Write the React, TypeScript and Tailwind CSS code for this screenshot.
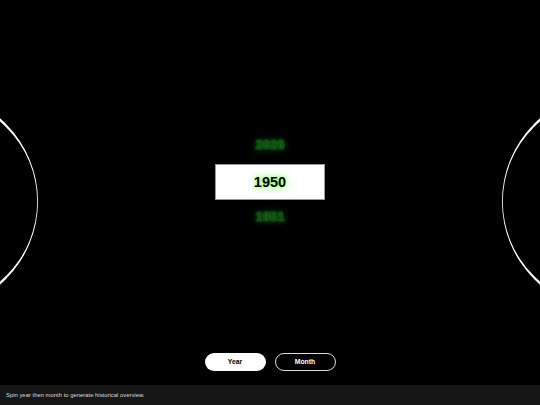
import React from "react";

function Crescent({ cx, dir }: { cx: number; dir: 1 | -1 }) {
  const cy = 201.5;
  const ro = 110;
  const ri = 104.4;
  const cxi = cx + dir * 4.8;
  const d =
    `M ${cx - ro} ${cy} a ${ro} ${ro} 0 1 0 ${2 * ro} 0 a ${ro} ${ro} 0 1 0 ${-2 * ro} 0 Z ` +
    `M ${cxi - ri} ${cy} a ${ri} ${ri} 0 1 0 ${2 * ri} 0 a ${ri} ${ri} 0 1 0 ${-2 * ri} 0 Z`;
  return <path d={d} fill="#ffffff" fillRule="evenodd" />;
}

export default function App() {
  return (
    <div
      className="w-[540px] h-[405px] bg-black flex flex-col overflow-hidden"
      style={{ fontFamily: '"Liberation Sans", Arial, sans-serif' }}
    >
      <div className="relative h-[385px] flex flex-col items-center">
        <svg
          className="absolute left-0 top-0 pointer-events-none"
          width="540"
          height="385"
          viewBox="0 0 540 385"
        >
          <Crescent cx={-72} dir={1} />
          <Crescent cx={612} dir={-1} />
        </svg>

        <div className="mt-[137px] h-[16px] leading-[16px] text-[13px] font-bold text-[#17441a] [text-shadow:0_0_2px_#1fa81f,0_0_6px_#139a13]">
          2026
        </div>
        <div className="mt-[11px] w-[110px] h-[36px] bg-white border border-[#9a9a9a] flex items-center justify-center">
          <span className="text-[14.5px] font-bold text-black leading-none [text-shadow:0_0_3px_#8cff6a,0_0_8px_#66ff44]">
            1950
          </span>
        </div>
        <div className="mt-[9px] h-[16px] leading-[16px] text-[13px] font-bold text-[#17441a] [text-shadow:0_0_2px_#1fa81f,0_0_6px_#139a13]">
          1951
        </div>

        <div className="mt-auto mb-[14px] flex gap-[9px]">
          <button className="w-[61px] h-[18px] rounded-full bg-white text-black text-[6.8px] font-bold flex items-center justify-center">
            Year
          </button>
          <button className="w-[61px] h-[18px] rounded-full bg-black text-white border border-[#dcdcdc] text-[6.8px] font-bold flex items-center justify-center">
            Month
          </button>
        </div>
      </div>
      <div className="h-[20px] bg-[#161616] flex items-center px-[6px]">
        <span className="text-[5.9px] text-[#dcdcdc]">
          Spin year then month to generate historical overview.
        </span>
      </div>
    </div>
  );
}
